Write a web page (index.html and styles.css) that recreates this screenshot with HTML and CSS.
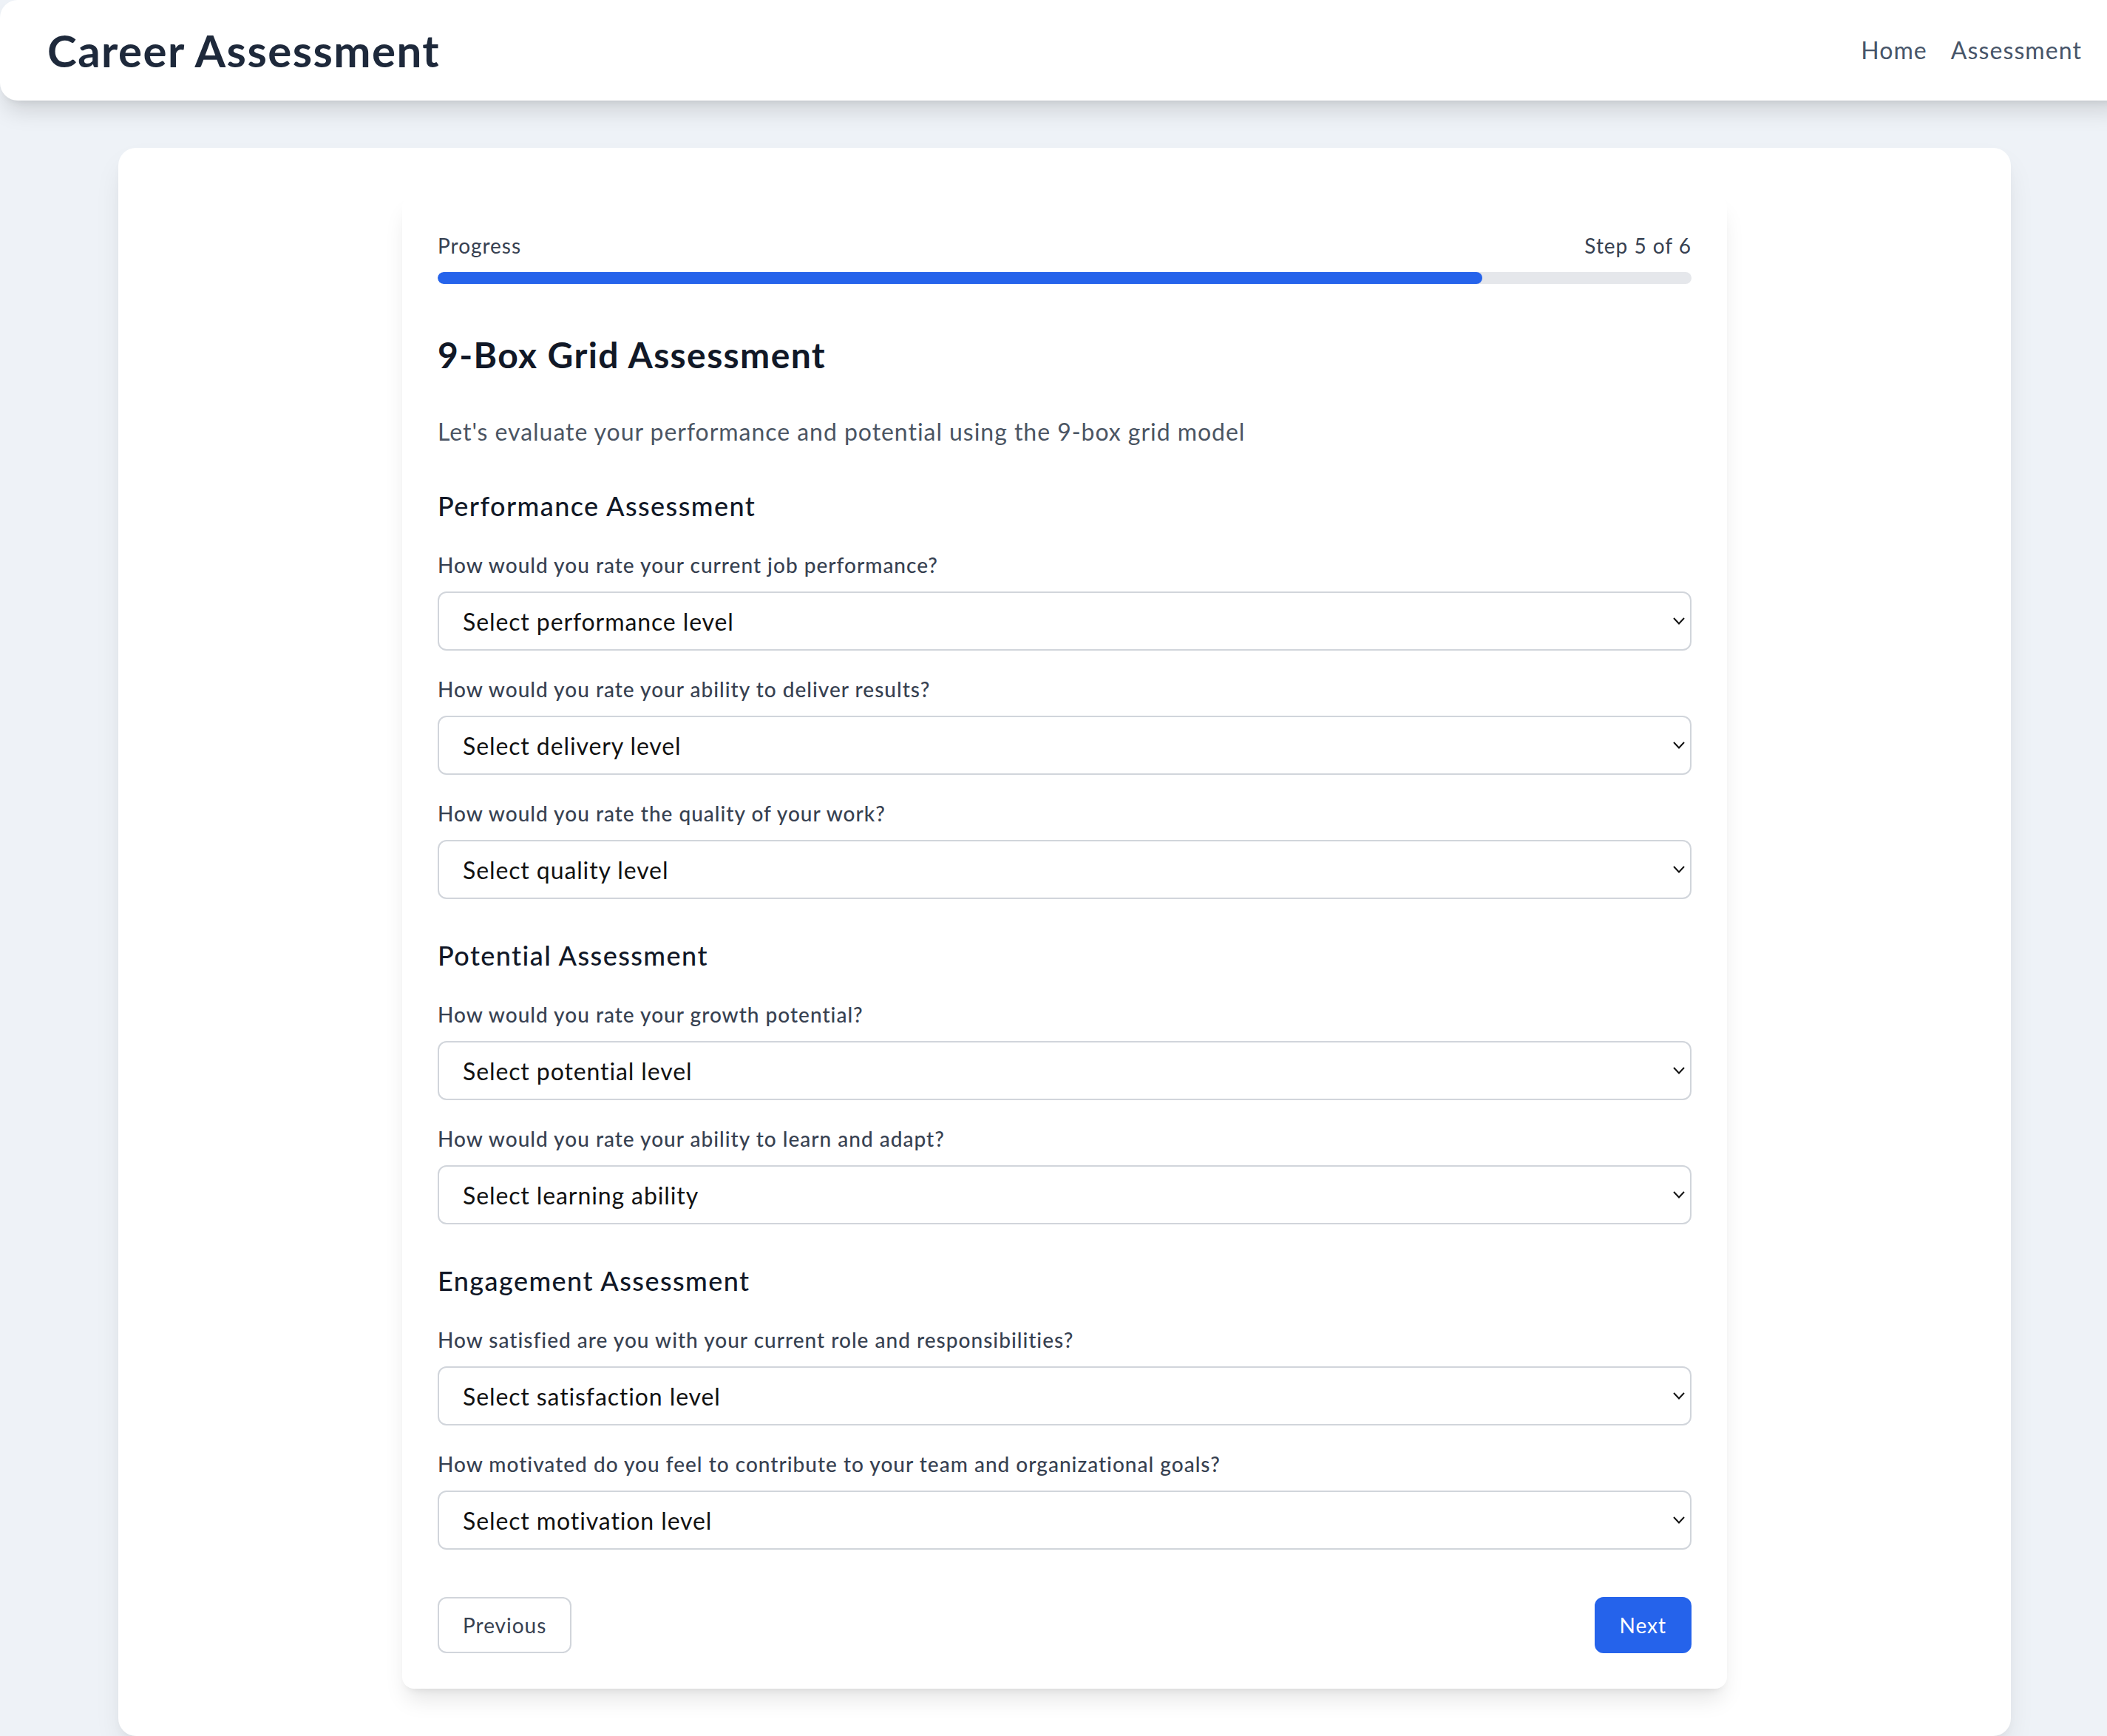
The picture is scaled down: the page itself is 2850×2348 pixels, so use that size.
FILE: index.html
```html
<!DOCTYPE html>
<html lang="en">
<head>
<meta charset="utf-8">
<title>Career Assessment</title>
<link rel="stylesheet" href="styles.css">
</head>
<body>
<div class="page">
  <header class="topbar">
    <h1 class="brand">Career Assessment</h1>
    <nav class="nav">
      <a href="#">Home</a>
      <a href="#">Assessment</a>
    </nav>
  </header>
  <main class="main">
    <div class="outer">
      <div class="card">
        <div class="progress-head"><span>Progress</span><span>Step 5 of 6</span></div>
        <div class="track"><div class="fill" style="width:83.333%"></div></div>
        <h2 class="title">9-Box Grid Assessment</h2>
        <p class="lead">Let's evaluate your performance and potential using the 9-box grid model</p>

        <section class="section">
          <h3 class="section-title">Performance Assessment</h3>
          <div class="fields">
            <div class="field">
              <label class="label">How would you rate your current job performance?</label>
              <div class="select-wrap">
                <select class="select"><option>Select performance level</option></select>
                <svg class="chev" viewBox="0 0 16 10"><polyline points="1,1 8,8.5 15,1" fill="none" stroke="#111" stroke-width="2"/></svg>
              </div>
            </div>
            <div class="field">
              <label class="label">How would you rate your ability to deliver results?</label>
              <div class="select-wrap">
                <select class="select"><option>Select delivery level</option></select>
                <svg class="chev" viewBox="0 0 16 10"><polyline points="1,1 8,8.5 15,1" fill="none" stroke="#111" stroke-width="2"/></svg>
              </div>
            </div>
            <div class="field">
              <label class="label">How would you rate the quality of your work?</label>
              <div class="select-wrap">
                <select class="select"><option>Select quality level</option></select>
                <svg class="chev" viewBox="0 0 16 10"><polyline points="1,1 8,8.5 15,1" fill="none" stroke="#111" stroke-width="2"/></svg>
              </div>
            </div>
          </div>
        </section>

        <section class="section">
          <h3 class="section-title">Potential Assessment</h3>
          <div class="fields">
            <div class="field">
              <label class="label">How would you rate your growth potential?</label>
              <div class="select-wrap">
                <select class="select"><option>Select potential level</option></select>
                <svg class="chev" viewBox="0 0 16 10"><polyline points="1,1 8,8.5 15,1" fill="none" stroke="#111" stroke-width="2"/></svg>
              </div>
            </div>
            <div class="field">
              <label class="label">How would you rate your ability to learn and adapt?</label>
              <div class="select-wrap">
                <select class="select"><option>Select learning ability</option></select>
                <svg class="chev" viewBox="0 0 16 10"><polyline points="1,1 8,8.5 15,1" fill="none" stroke="#111" stroke-width="2"/></svg>
              </div>
            </div>
          </div>
        </section>

        <section class="section">
          <h3 class="section-title">Engagement Assessment</h3>
          <div class="fields">
            <div class="field">
              <label class="label">How satisfied are you with your current role and responsibilities?</label>
              <div class="select-wrap">
                <select class="select"><option>Select satisfaction level</option></select>
                <svg class="chev" viewBox="0 0 16 10"><polyline points="1,1 8,8.5 15,1" fill="none" stroke="#111" stroke-width="2"/></svg>
              </div>
            </div>
            <div class="field">
              <label class="label">How motivated do you feel to contribute to your team and organizational goals?</label>
              <div class="select-wrap">
                <select class="select"><option>Select motivation level</option></select>
                <svg class="chev" viewBox="0 0 16 10"><polyline points="1,1 8,8.5 15,1" fill="none" stroke="#111" stroke-width="2"/></svg>
              </div>
            </div>
          </div>
        </section>

        <div class="actions">
          <button class="btn btn-prev" type="button">Previous</button>
          <button class="btn btn-next" type="button">Next</button>
        </div>
      </div>
    </div>
  </main>
</div>
</body>
</html>
```
FILE: styles.css
```css
html, body {
  margin: 0;
  padding: 0;
  overflow: hidden;
  background: #eef2f7;
}

body {
  font-family: Lato, "Liberation Sans", sans-serif;
  color: #111827;
}

.page {
  width: 2880px;
  min-height: 2348px;
}

.topbar {
  position: relative;
  z-index: 1;
  box-sizing: border-box;
  height: 136px;
  padding: 0 64px;
  display: flex;
  align-items: center;
  justify-content: space-between;
  background: #fff;
  border-radius: 24px;
  box-shadow: 0 20px 30px -6px rgba(0, 0, 0, 0.13), 0 8px 12px -8px rgba(0, 0, 0, 0.1);
}

.brand {
  margin: 0;
  font-size: 60px;
  line-height: 80px;
  font-weight: 700;
  letter-spacing: 0.024em;
  color: #1e293b;
}

.nav {
  display: flex;
  gap: 32px;
}

.nav a {
  font-size: 32px;
  line-height: 48px;
  letter-spacing: 0.034em;
  color: #475569;
  text-decoration: none;
}

.main {
  padding: 64px 160px 0;
}

.outer {
  background: #fff;
  border-radius: 24px;
  padding: 64px;
  box-shadow: 0 20px 40px -8px rgba(0, 0, 0, 0.1), 0 8px 16px -8px rgba(0, 0, 0, 0.08);
}

.card {
  box-sizing: border-box;
  max-width: 1792px;
  margin: 0 auto;
  padding: 48px;
  background: #fff;
  border-radius: 16px;
  box-shadow: 0 20px 30px -6px rgba(0, 0, 0, 0.1), 0 8px 12px -8px rgba(0, 0, 0, 0.1);
}

.progress-head {
  display: flex;
  justify-content: space-between;
  font-size: 28px;
  line-height: 40px;
  letter-spacing: 0.035em;
  color: #374151;
  margin-bottom: 16px;
}

.track {
  height: 16px;
  border-radius: 999px;
  background: #e5e7eb;
  overflow: hidden;
  margin-bottom: 64px;
}

.fill {
  height: 100%;
  background: #2563eb;
  border-radius: 999px;
}

.title {
  margin: 0 0 48px;
  font-size: 48px;
  line-height: 64px;
  font-weight: 700;
  letter-spacing: 0.029em;
  color: #111827;
}

.lead {
  margin: 0 0 48px;
  font-size: 32px;
  line-height: 48px;
  letter-spacing: 0.03em;
  color: #4b5563;
}

.section + .section {
  margin-top: 48px;
}

.section-title {
  margin: 0 0 32px;
  font-size: 36px;
  line-height: 56px;
  font-weight: 500;
  letter-spacing: 0.04em;
  color: #111827;
}

.fields {
  display: flex;
  flex-direction: column;
  gap: 32px;
}

.label {
  display: block;
  margin-bottom: 16px;
  font-size: 28px;
  line-height: 40px;
  font-weight: 500;
  letter-spacing: 0.036em;
  color: #374151;
}

.select-wrap {
  position: relative;
}

.select {
  -webkit-appearance: none;
  appearance: none;
  box-sizing: border-box;
  display: block;
  width: 100%;
  height: 80px;
  padding: 0 60px 0 32px;
  border: 2px solid #d1d5db;
  border-radius: 12px;
  background: #fff;
  font-family: inherit;
  font-size: 32px;
  letter-spacing: 0.028em;
  color: #111;
}

.chev {
  position: absolute;
  right: 9px;
  top: 50%;
  width: 16px;
  height: 10px;
  margin-top: -5px;
  pointer-events: none;
}

.actions {
  display: flex;
  justify-content: space-between;
  margin-top: 64px;
}

.btn {
  box-sizing: border-box;
  height: 76px;
  padding: 0 32px;
  border-radius: 12px;
  font-family: inherit;
  font-size: 28px;
  line-height: 40px;
  letter-spacing: 0.035em;
  cursor: pointer;
}

.btn-prev {
  background: #fff;
  border: 2px solid #d1d5db;
  color: #374151;
}

.btn-next {
  background: #2563eb;
  border: 2px solid #2563eb;
  color: #fff;
}
```
